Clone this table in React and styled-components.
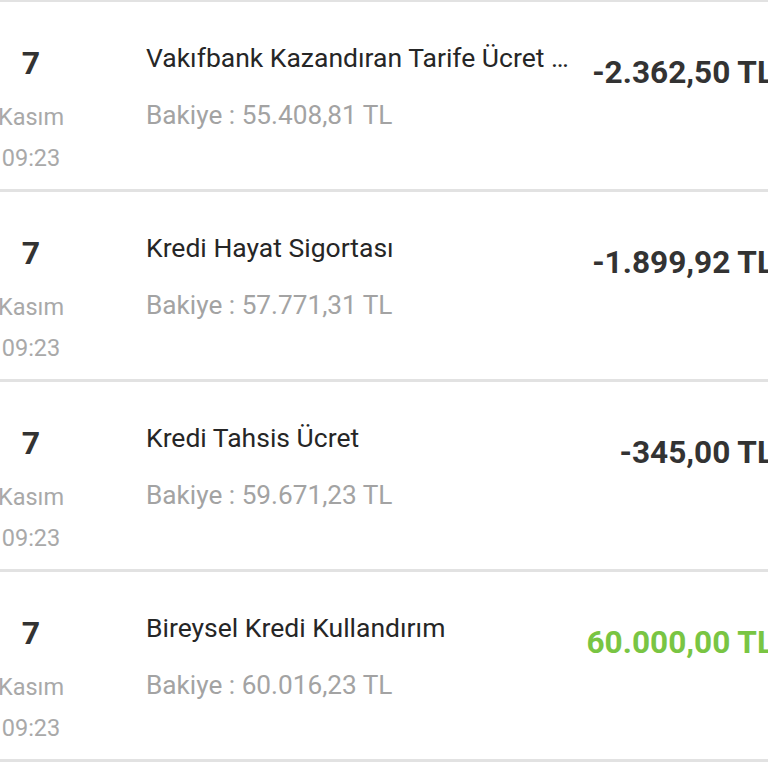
import React from "react";
import styled, { createGlobalStyle } from "styled-components";

const Global = createGlobalStyle`
  html, body {
    margin: 0;
    padding: 0;
    background: #ffffff;
    overflow: hidden;
    font-family: Roboto, "Liberation Sans", sans-serif;
  }
`;

const List = styled.div`
  margin: -1px -6px 0 -24px;
  border-bottom: 3px solid #e2e2e2;
`;

const Row = styled.div`
  box-sizing: border-box;
  height: 190px;
  border-top: 3px solid #e2e2e2;
  display: flex;
  align-items: flex-start;
  padding-top: 38px;
`;

const DateCol = styled.div`
  width: 110px;
  flex-shrink: 0;
  margin-top: 3px;
  display: flex;
  flex-direction: column;
  align-items: center;
`;

const Day = styled.div`
  font-size: 32px;
  font-weight: 700;
  line-height: 40px;
  color: #333333;
  margin-bottom: 14px;
`;

const DateLine = styled.div`
  font-size: 23.5px;
  line-height: 41px;
  color: #a9a9a9;
`;

const Info = styled.div`
  flex: 1;
  min-width: 0;
  margin-left: 60px;
`;

const Title = styled.div`
  font-size: 26.5px;
  line-height: 36px;
  color: #262626;
  white-space: nowrap;
  overflow: hidden;
  text-overflow: ellipsis;
`;

const Balance = styled.div`
  margin-top: 21px;
  font-size: 26.2px;
  line-height: 36px;
  color: #a3a3a3;
  white-space: nowrap;
`;

const Amount = styled.div`
  flex-shrink: 0;
  margin-left: 20px;
  margin-top: 13px;
  font-size: 31.6px;
  font-weight: 700;
  line-height: 40px;
  white-space: nowrap;
  text-align: right;
  color: ${(p) => (p.$positive ? "#79c543" : "#333333")};
`;

const rows = [
  { title: "Vakıfbank Kazandıran Tarife Ücret …", balance: "55.408,81", amount: "-2.362,50 TL" },
  { title: "Kredi Hayat Sigortası", balance: "57.771,31", amount: "-1.899,92 TL" },
  { title: "Kredi Tahsis Ücret", balance: "59.671,23", amount: "-345,00 TL" },
  { title: "Bireysel Kredi Kullandırım", balance: "60.016,23", amount: "60.000,00 TL", positive: true },
];

export default function App() {
  return (
    <>
      <Global />
      <List>
        {rows.map((r, i) => (
          <Row key={i}>
            <DateCol>
              <Day>7</Day>
              <DateLine>Kasım</DateLine>
              <DateLine>09:23</DateLine>
            </DateCol>
            <Info>
              <Title>{r.title}</Title>
              <Balance>Bakiye : {r.balance} TL</Balance>
            </Info>
            <Amount $positive={r.positive}>{r.amount}</Amount>
          </Row>
        ))}
      </List>
    </>
  );
}
